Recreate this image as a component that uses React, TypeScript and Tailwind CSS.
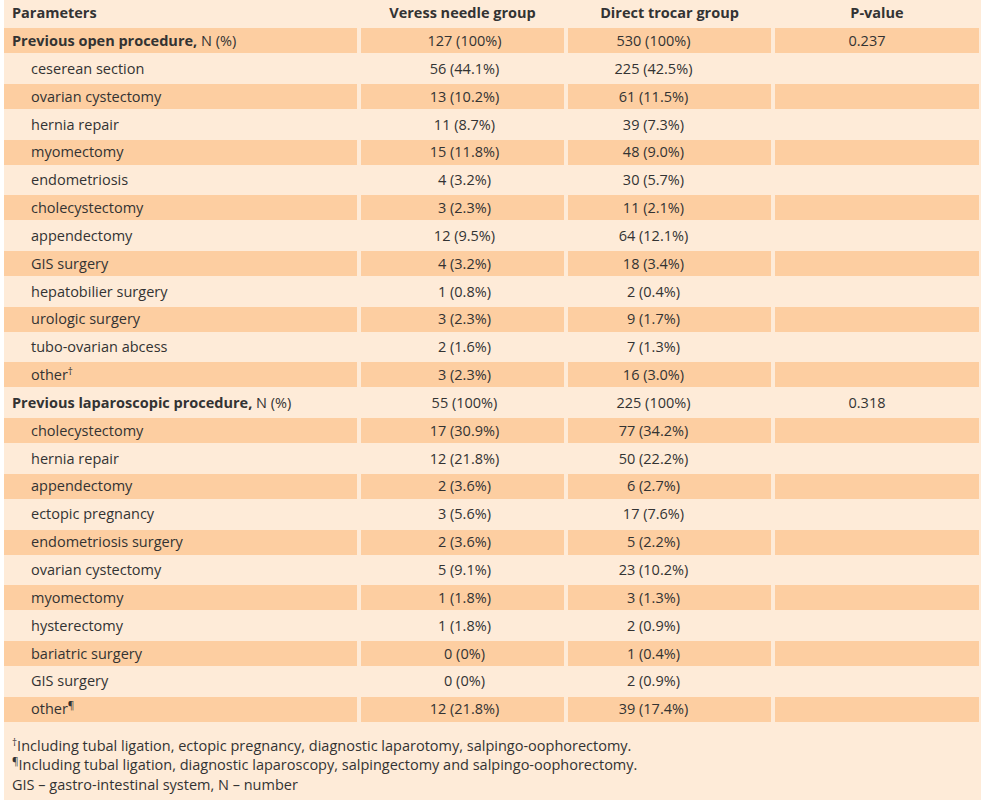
import React from 'react';

type Row = {
  label: string;
  veress: string;
  direct: string;
  p?: string;
  head?: boolean;
  sup?: string;
};

const rows: Row[] = [
  { label: 'Previous open procedure', veress: '127 (100%)', direct: '530 (100%)', p: '0.237', head: true },
  { label: 'ceserean section', veress: '56 (44.1%)', direct: '225 (42.5%)' },
  { label: 'ovarian cystectomy', veress: '13 (10.2%)', direct: '61 (11.5%)' },
  { label: 'hernia repair', veress: '11 (8.7%)', direct: '39 (7.3%)' },
  { label: 'myomectomy', veress: '15 (11.8%)', direct: '48 (9.0%)' },
  { label: 'endometriosis', veress: '4 (3.2%)', direct: '30 (5.7%)' },
  { label: 'cholecystectomy', veress: '3 (2.3%)', direct: '11 (2.1%)' },
  { label: 'appendectomy', veress: '12 (9.5%)', direct: '64 (12.1%)' },
  { label: 'GIS surgery', veress: '4 (3.2%)', direct: '18 (3.4%)' },
  { label: 'hepatobilier surgery', veress: '1 (0.8%)', direct: '2 (0.4%)' },
  { label: 'urologic surgery', veress: '3 (2.3%)', direct: '9 (1.7%)' },
  { label: 'tubo-ovarian abcess', veress: '2 (1.6%)', direct: '7 (1.3%)' },
  { label: 'other', veress: '3 (2.3%)', direct: '16 (3.0%)', sup: '†' },
  { label: 'Previous laparoscopic procedure', veress: '55 (100%)', direct: '225 (100%)', p: '0.318', head: true },
  { label: 'cholecystectomy', veress: '17 (30.9%)', direct: '77 (34.2%)' },
  { label: 'hernia repair', veress: '12 (21.8%)', direct: '50 (22.2%)' },
  { label: 'appendectomy', veress: '2 (3.6%)', direct: '6 (2.7%)' },
  { label: 'ectopic pregnancy', veress: '3 (5.6%)', direct: '17 (7.6%)' },
  { label: 'endometriosis surgery', veress: '2 (3.6%)', direct: '5 (2.2%)' },
  { label: 'ovarian cystectomy', veress: '5 (9.1%)', direct: '23 (10.2%)' },
  { label: 'myomectomy', veress: '1 (1.8%)', direct: '3 (1.3%)' },
  { label: 'hysterectomy', veress: '1 (1.8%)', direct: '2 (0.9%)' },
  { label: 'bariatric surgery', veress: '0 (0%)', direct: '1 (0.4%)' },
  { label: 'GIS surgery', veress: '0 (0%)', direct: '2 (0.9%)' },
  { label: 'other', veress: '12 (21.8%)', direct: '39 (17.4%)', sup: '¶' },
];

const gridCols = 'grid grid-cols-[353px_203px_203px_204px] gap-x-[4px]';

const App: React.FC = () => {
  return (
    <div className="min-h-[800px] w-[981px] bg-white pl-[4px]">
      <div
        className="min-h-[800px] bg-[#feebd8] text-[14.5px] text-[#333333]"
        style={{ fontFamily: '"Open Sans", "Noto Sans", sans-serif' }}
      >
        <div className="flex flex-col gap-y-[2.85px]">
          {/* header */}
          <div className={`${gridCols} h-[25.5px] items-center font-bold`}>
            <div className="pl-[8px]">Parameters</div>
            <div className="text-center">Veress needle group</div>
            <div className="text-center">Direct trocar group</div>
            <div className="text-center">P-value</div>
          </div>

          {rows.map((row, i) => {
            const cell = i % 2 === 0 ? 'bg-[#fdcea1]' : 'bg-[#feebd8]';
            return (
              <div key={i} className={`${gridCols} h-[25px]`}>
                <div className={`${cell} flex items-center ${row.head ? 'pl-[8px]' : 'pl-[27px]'}`}>
                  {row.head ? (
                    <span>
                      <span className="font-bold">{row.label},</span> N (%)
                    </span>
                  ) : (
                    <span>
                      {row.label}
                      {row.sup && <sup className="text-[10px] -top-[0.5em]">{row.sup}</sup>}
                    </span>
                  )}
                </div>
                <div className={`${cell} flex items-center justify-center pl-[4px]`}>{row.veress}</div>
                <div className={`${cell} flex items-center justify-center pr-[32px]`}>{row.direct}</div>
                <div className={`${cell} flex items-center justify-center pr-[20px]`}>{row.p ?? ''}</div>
              </div>
            );
          })}
        </div>

        <div className="mt-[14px] pl-[8px] leading-[19.5px]">
          <div>
            <sup className="text-[10px] -top-[0.5em]">†</sup>Including tubal ligation, ectopic pregnancy, diagnostic laparotomy, salpingo-oophorectomy.
          </div>
          <div>
            <sup className="text-[10px] -top-[0.5em]">¶</sup>Including tubal ligation, diagnostic laparoscopy, salpingectomy and salpingo-oophorectomy.
          </div>
          <div>GIS – gastro-intestinal system, N – number</div>
        </div>
      </div>
    </div>
  );
};

export default App;
